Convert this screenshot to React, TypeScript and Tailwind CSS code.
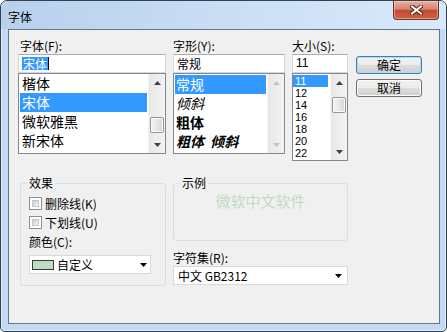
import React from "react"

const fontRows = ["楷体", "宋体", "微软雅黑", "新宋体"]
const styleRows = [
  { label: "常规", cls: "" },
  { label: "倾斜", cls: "italic" },
  { label: "粗体", cls: "font-bold" },
  { label: "粗体 倾斜", cls: "font-bold italic" },
]
const sizeRows = ["11", "12", "14", "16", "18", "20", "22"]

function Arrow({ down, color = "#3f3f3f" }: { down?: boolean; color?: string }) {
  return (
    <svg width="7" height="4" viewBox="0 0 7 4">
      <path d={down ? "M0 0H7L3.5 4Z" : "M3.5 0L7 4H0Z"} fill={color} />
    </svg>
  )
}

function ScrollBar({ thumb, disabled }: { thumb?: string; disabled?: boolean }) {
  const c = disabled ? "#c4c4c4" : "#3f3f3f"
  return (
    <div className="flex w-[17px] flex-col border-l border-[#f4f4f4] bg-gradient-to-r from-[#e7e7e7] to-[#f3f3f3]">
      <div className="flex h-[17px] items-center justify-center">
        <Arrow color={c} />
      </div>
      <div className="flex-1">
        {thumb && (
          <div
            className={`${thumb} mx-[1px] h-[16px] rounded-[2px] border border-[#979797] bg-gradient-to-r from-[#f4f4f4] via-[#e8e8e8] to-[#d6d6d6] shadow-[inset_0_0_0_1px_#fafafa]`}
          />
        )}
      </div>
      <div className="flex h-[17px] items-center justify-center">
        <Arrow down color={c} />
      </div>
    </div>
  )
}

function Input({ children }: { children: React.ReactNode }) {
  return (
    <div className="flex h-[19px] items-center border border-[#d3d7de] border-t-[#abadb3] bg-white pl-[2px] text-[12px] leading-[13px]">
      {children}
    </div>
  )
}

function Checkbox({ label }: { label: string }) {
  return (
    <div className="flex h-[13px] items-center">
      <div className="h-[13px] w-[13px] border border-[#8e8f8f] bg-white p-[2px]">
        <div className="h-full w-full border border-[#c6c6c6] bg-gradient-to-br from-[#cbcbcb] to-[#f6f6f6]" />
      </div>
      <span className="ml-[3px] text-[12px] leading-[13px]">{label}</span>
    </div>
  )
}

export default function App() {
  return (
    <div className="flex h-[332px] w-[447px] flex-col overflow-hidden rounded-t-[7px] rounded-b-[5px] border border-[#34414f] bg-[#c3daf3] font-['Noto_Sans_CJK_SC',sans-serif] text-black shadow-[inset_0_0_0_1px_rgba(255,255,255,0.55)]">
      {/* title bar */}
      <div className="flex h-[28px] justify-between bg-gradient-to-r from-[#b7d0ec] via-[#c9def5] to-[#d9e9fa] pr-[7px]">
        <div className="pl-[7px] pt-[10px] text-[12px] leading-[12px]">字体</div>
        <div className="flex h-[19px] w-[46px] items-center justify-center rounded-b-[4px] border border-t-0 border-[#5d3a34] bg-[linear-gradient(#eab0a2,#d9836f_45%,#c24b35_52%,#d0603f)] shadow-[inset_0_0_0_1px_rgba(255,220,200,0.45)]">
          <svg width="13" height="10" viewBox="0 0 13 10">
            <path d="M2 1.5L11 8.5M11 1.5L2 8.5" stroke="#4a2018" strokeWidth="4" strokeLinecap="square" />
            <path d="M2 1.5L11 8.5M11 1.5L2 8.5" stroke="#ffffff" strokeWidth="2" strokeLinecap="square" />
          </svg>
        </div>
      </div>

      {/* client area */}
      <div className="ml-[7px] h-[295px] w-[432px] border border-[#66778a] bg-[#f0f0f0] text-[12px]">
        {/* top section */}
        <div className="flex pl-[9px] pt-[9px]">
          <div className="flex w-[148px] flex-col">
            <div className="h-[15px] pl-[2px] leading-[14px]">字体(F):</div>
            <Input>
              <span className="ml-[1px] bg-[#3399ff] px-[1px] text-white">宋体</span>
              <span className="h-[13px] w-px bg-black" />
            </Input>
            <div className="flex h-[81px] border border-[#828790] bg-white">
              <div className="flex-1 pl-[1px] pr-[1px] text-[14px]">
                {fontRows.map((r) => (
                  <div
                    key={r}
                    className={`h-[19px] pl-[2px] leading-[19px] ${r === "宋体" ? "bg-[#3399ff] text-white" : ""}`}
                  >
                    {r}
                  </div>
                ))}
              </div>
              <ScrollBar thumb="mt-[26px]" />
            </div>
          </div>

          <div className="ml-[7px] flex w-[112px] flex-col">
            <div className="h-[15px] leading-[14px]">字形(Y):</div>
            <Input>
              <span className="pl-[1px]">常规</span>
            </Input>
            <div className="flex h-[81px] border border-[#828790] bg-white">
              <div className="flex-1 pl-[1px] pr-[1px] pt-[1px] text-[14px]">
                {styleRows.map((r) => (
                  <div
                    key={r.label}
                    className={`h-[19px] whitespace-pre pl-[1px] leading-[19px] ${r.cls} ${
                      r.label === "常规" ? "bg-[#3399ff] text-white" : ""
                    }`}
                  >
                    {r.label === "粗体 倾斜" ? "粗体  倾斜" : r.label}
                  </div>
                ))}
              </div>
              <ScrollBar disabled />
            </div>
          </div>

          <div className="ml-[7px] flex w-[56px] flex-col">
            <div className="h-[15px] leading-[14px]">大小(S):</div>
            <Input>
              <span className="pl-[1px] font-['Liberation_Sans',sans-serif]">11</span>
            </Input>
            <div className="flex h-[88px] border border-[#828790] bg-white">
              <div className="flex-1 pr-[2px] pt-[1px] font-['Liberation_Sans',sans-serif] text-[11px]">
                {sizeRows.map((r) => (
                  <div
                    key={r}
                    className={`h-[12px] pl-[2px] leading-[12px] ${r === "11" ? "bg-[#3399ff] text-white" : ""}`}
                  >
                    {r}
                  </div>
                ))}
              </div>
              <ScrollBar thumb="mt-[6px]" />
            </div>
          </div>

          <div className="ml-[8px] flex w-[66px] flex-col pt-[17px]">
            <button className="h-[18px] rounded-[3px] border border-[#3c7fb1] bg-[linear-gradient(#f2f2f2,#ebebeb_50%,#dddddd_50%,#cfcfcf)] text-[12px] leading-[14px] shadow-[inset_0_0_0_1px_#aedcf5]">
              确定
            </button>
            <button className="mt-[5px] h-[18px] rounded-[3px] border border-[#707070] bg-[linear-gradient(#f2f2f2,#ebebeb_50%,#dddddd_50%,#cfcfcf)] text-[12px] leading-[14px] shadow-[inset_0_0_0_1px_#fbfbfb]">
              取消
            </button>
          </div>
        </div>

        {/* bottom section */}
        <div className="mt-[15px] flex pl-[11px]">
          <fieldset className="flex h-[110px] w-[146px] flex-col rounded-[3px] border border-[#d5dfe5] pl-[8px]">
            <legend className="-ml-[2px] px-[2px] leading-[14px]">效果</legend>
            <div className="mt-[7px]">
              <Checkbox label="删除线(K)" />
            </div>
            <div className="mt-[6px]">
              <Checkbox label="下划线(U)" />
            </div>
            <div className="mt-[5px] h-[15px] leading-[15px]">颜色(C):</div>
            <div className="mt-[6px] flex h-[19px] w-[122px] items-center border border-[#d6d9de] bg-white">
              <div className="ml-[2px] h-[10px] w-[22px] border border-[#3a3a3a] bg-[#c0dcc0]" />
              <span className="ml-[3px] flex-1 leading-[14px]">自定义</span>
              <span className="mr-[3px] flex">
                <Arrow down color="#000" />
              </span>
            </div>
          </fieldset>

          <div className="ml-[7px] flex w-[175px] flex-col">
            <fieldset className="flex h-[65px] flex-col rounded-[3px] border border-[#d5dfe5]">
              <legend className="ml-[6px] px-[2px] leading-[14px]">示例</legend>
              <div className="flex flex-1 items-center justify-center text-[15px] text-[#c0dcc0]">微软中文软件</div>
            </fieldset>
            <div className="mt-[9px] h-[16px] leading-[15px]">字符集(R):</div>
            <div className="flex h-[19px] items-center border border-[#d6d9de] bg-white">
              <span className="flex-1 whitespace-pre pl-[4px] leading-[14px]">中文 GB2312</span>
              <span className="mr-[5px] flex">
                <Arrow down color="#000" />
              </span>
            </div>
          </div>
        </div>
      </div>
    </div>
  )
}
